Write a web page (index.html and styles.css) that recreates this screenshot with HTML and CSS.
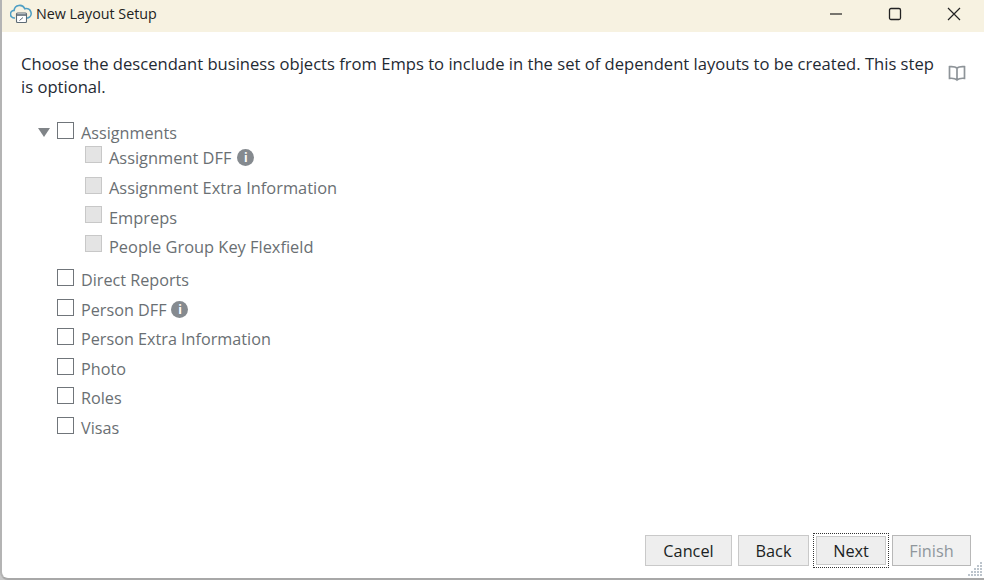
FILE: index.html
```html
<!DOCTYPE html>
<html lang="en">
<head>
<meta charset="utf-8">
<title>New Layout Setup</title>
<link rel="stylesheet" href="styles.css">
</head>
<body>
<div class="window">
  <header class="titlebar">
    <svg class="app-icon" width="22" height="20" viewBox="0 0 22 20" fill="none">
      <path d="M5 14H4.500a3.800 3.800 0 0 1-.4-7.600A5.600 5.600 0 0 1 14.800 4.800a4.400 4.400 0 0 1 3 9.200H17" stroke="#4f9fc4" stroke-width="1.600"/>
      <rect x="6.500" y="9" width="10" height="9.500" rx="1" stroke="#5d6b75" stroke-width="1.100" fill="#fff"/>
      <path d="M6.500 11h10" stroke="#5d6b75" stroke-width="1.600"/>
      <path d="M9.500 16.500l3.500-3" stroke="#5d6b75" stroke-width="1"/>
    </svg>
    <span class="title">New Layout Setup</span>
    <div class="controls">
      <svg width="14" height="14" viewBox="0 0 14 14"><path d="M1 7h12" stroke="#222" stroke-width="1.200"/></svg>
      <svg width="14" height="14" viewBox="0 0 14 14" fill="none"><rect x="1.500" y="1.500" width="11" height="11" rx="1.500" stroke="#222" stroke-width="1.300"/></svg>
      <svg width="14" height="14" viewBox="0 0 14 14"><path d="M1 1l12 12M13 1L1 13" stroke="#222" stroke-width="1.200"/></svg>
    </div>
  </header>
  <main class="content">
    <div class="intro">
      <p class="prompt">Choose the descendant business objects from Emps to include in the set of dependent layouts to be created. This step is optional.</p>
      <svg class="book" width="18" height="17" viewBox="0 0 18 17" fill="none"><path d="M9 3C7.500 1.800 4 1.500 1.500 1.700v11.600c2.500-.2 6 .1 7.500 1.700 1.500-1.600 5-1.900 7.500-1.700V1.700C14 1.500 10.500 1.800 9 3zM9 3v12" stroke="#8e9499" stroke-width="1.700"/></svg>
    </div>
    <div class="tree">
      <div class="row top first"><span class="twist"></span><span class="check"></span><span>Assignments</span></div>
      <div class="children">
        <div class="row h1"><span class="check off"></span><span>Assignment DFF</span><span class="info">i</span></div>
        <div class="row h2"><span class="check off"></span><span>Assignment Extra Information</span></div>
        <div class="row h2"><span class="check off"></span><span>Empreps</span></div>
        <div class="row h2"><span class="check off"></span><span>People Group Key Flexfield</span></div>
      </div>
      <div class="row top gap"><span class="check"></span><span>Direct Reports</span></div>
      <div class="row top"><span class="check"></span><span>Person DFF</span><span class="info">i</span></div>
      <div class="row top"><span class="check"></span><span>Person Extra Information</span></div>
      <div class="row top"><span class="check"></span><span>Photo</span></div>
      <div class="row top"><span class="check"></span><span>Roles</span></div>
      <div class="row top"><span class="check"></span><span>Visas</span></div>
    </div>
  </main>
  <footer class="actions">
    <button class="btn cancel">Cancel</button>
    <button class="btn back">Back</button>
    <span class="focus"><button class="btn next">Next</button></span>
    <button class="btn finish" disabled>Finish</button>
  </footer>
  <svg class="grip" width="16" height="16" viewBox="0 0 16 16" fill="#bcc4cc"><rect x="12" y="0" width="2" height="2"/><rect x="9" y="3" width="2" height="2"/><rect x="12" y="3" width="2" height="2"/><rect x="6" y="6" width="2" height="2"/><rect x="9" y="6" width="2" height="2"/><rect x="12" y="6" width="2" height="2"/><rect x="3" y="9" width="2" height="2"/><rect x="6" y="9" width="2" height="2"/><rect x="9" y="9" width="2" height="2"/><rect x="12" y="9" width="2" height="2"/><rect x="0" y="12" width="2" height="2"/><rect x="3" y="12" width="2" height="2"/><rect x="6" y="12" width="2" height="2"/><rect x="9" y="12" width="2" height="2"/><rect x="12" y="12" width="2" height="2"/></svg>
</div>
</body>
</html>
```
FILE: styles.css
```css
* { box-sizing: border-box; }
html, body { margin: 0; height: 100%; overflow: hidden; background: #c8c8c8; }
body { font-family: "Open Sans", "Noto Sans", sans-serif; }
.window {
  position: relative;
  width: 984px;
  height: 580px;
  display: flex;
  flex-direction: column;
  background: #fff;
  border-left: 2px solid #b4b4b4;
  border-bottom: 2px solid #a8a8a8;
  border-bottom-left-radius: 8px;
}
.titlebar {
  height: 32px;
  flex: none;
  display: flex;
  align-items: center;
  padding: 0 0 5px 8px;
  background: #f7f2e1;
}
.app-icon { flex: none; margin-right: 4px; }
.title { font-size: 14.300px; color: #222; }
.controls {
  margin-left: auto;
  display: flex;
  gap: 45px;
  padding-right: 23px;
}
.content { flex: 1; padding: 20px 18px 0 19px; }
.intro { display: flex; align-items: flex-start; justify-content: space-between; }
.prompt {
  margin: 0;
  width: 918px;
  font-size: 16.600px;
  line-height: 23px;
  color: #1f2a33;
}
.book { flex: none; margin-top: 13px; }
.tree { margin-top: 23px; font-size: 16.200px; color: #6a6f73; }
.row { display: flex; align-items: center; }
.top { height: 29.500px; padding-left: 36px; }
.first { height: 24px; position: relative; }
.twist {
  position: absolute;
  left: 17px;
  top: 7px;
  border-left: 6px solid transparent;
  border-right: 6px solid transparent;
  border-top: 9px solid #808488;
}
.check {
  flex: none;
  width: 17px;
  height: 17px;
  margin: -5px 7px 0 0;
  border: 1px solid #70757a;
  background: #fff;
}
.check.off { border-color: #c8c8c8; background: #e4e4e4; }
.children { padding-left: 64px; font-size: 16.400px; }
.h1 { height: 28px; padding-bottom: 4px; }
.h1 .info { margin-left: 6px; }
.h2 { height: 29.400px; }
.gap { margin-top: 4.200px; }
.info {
  width: 17px;
  height: 17px;
  margin-left: 5px;
  border-radius: 50%;
  background: #858a8f;
  color: #fff;
  font-size: 12px;
  font-weight: 700;
  line-height: 17px;
  text-align: center;
}
.actions {
  position: absolute;
  right: 13px;
  bottom: 10px;
  display: flex;
  align-items: center;
  gap: 6px;
}
.btn {
  height: 31px;
  padding: 0;
  font: 16.300px "Open Sans", "Noto Sans", sans-serif;
  color: #1b1f23;
  background: #eeeeee;
  border: 1px solid #c9c9c9;
}
.cancel { width: 87px; }
.back { width: 71px; }
.btn.next { width: 70px; height: 29px; display: block; }
.finish { width: 79px; color: #8f969c; background: #f1f1f1; border-color: #b8b8b8; }
.focus { display: block; padding: 2px; border: 1px dotted #333; margin: 0 -3px 0 -2px; }
.grip { position: absolute; right: 0; bottom: 0; }
```
